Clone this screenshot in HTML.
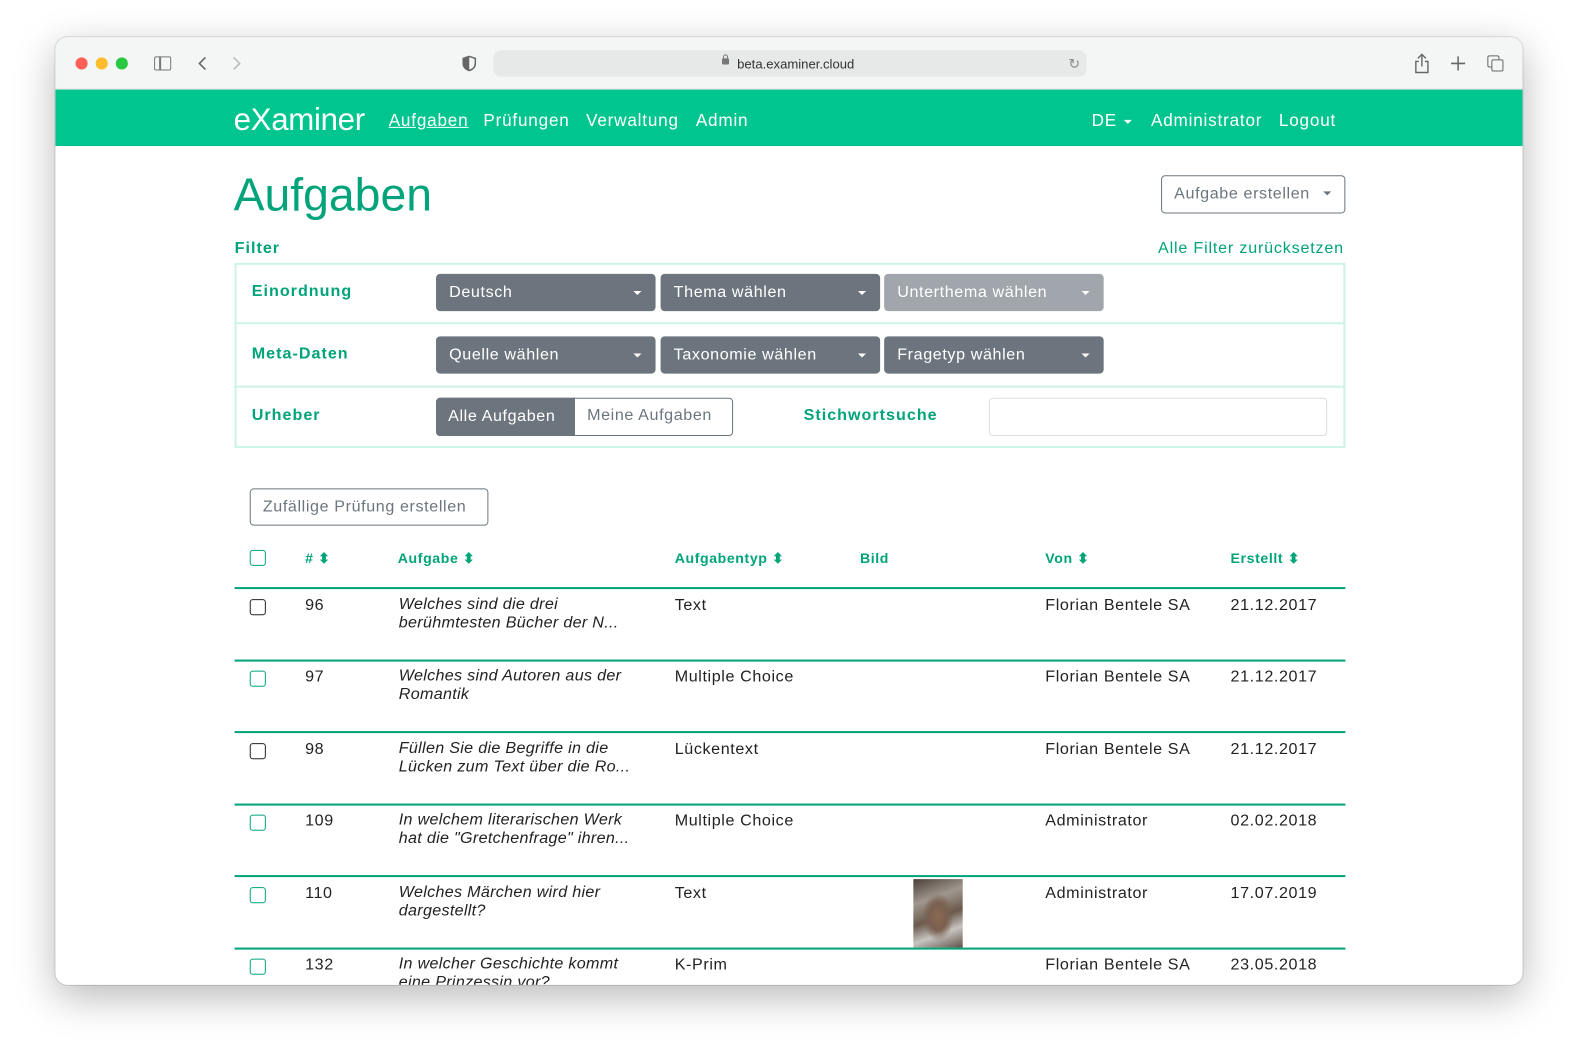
<!DOCTYPE html>
<html><head><meta charset="utf-8"><style>
*{box-sizing:border-box;margin:0;padding:0}
body{width:1579px;height:1059px;background:#fff;font-family:"Liberation Sans",sans-serif;position:relative;overflow:hidden}
#sc{position:absolute;left:0;top:0;width:1568px;height:1052px;transform:scale(1.007);transform-origin:0 0}
.a{position:absolute;white-space:nowrap}
.win{position:absolute;left:55px;top:37px;width:1457px;height:941px;border-radius:12px;overflow:hidden;box-shadow:0 12px 40px rgba(0,0,0,.28),0 0 0 1px rgba(0,0,0,.12);background:#fff}
#in{position:absolute;left:-55px;top:-37px;width:1568px;height:1052px}
.g{color:#00a37a}
.lb{font-size:16px;font-weight:bold;letter-spacing:1px}
.dd{position:absolute;height:37px;border-radius:4px;background:#6c757d;color:#fff;font-size:16px;line-height:37px;padding-left:13px;letter-spacing:0.6px}
.dd:after{content:"";position:absolute;right:14px;top:17px;border:4px solid transparent;border-top:4px solid #fff;border-bottom:0}
.cb{position:absolute;width:16px;height:16px;border:1.5px solid #222;border-radius:3px}
.cb.gg{border-color:#00a37a}
.line{position:absolute;left:233px;width:1103px;height:2px;background:#00a37a}
.row{font-size:16px;color:#222;letter-spacing:0.6px}
.it{font-style:italic;line-height:18px;white-space:normal;width:248px;letter-spacing:0.3px}
.hd{font-size:14px;font-weight:bold;letter-spacing:0.6px}
.nv{font-size:17px;color:#fff;letter-spacing:0.8px}
</style></head><body><div id="sc">
<div class="win"><div id="in">
<div class="a" style="left:55px;top:37px;width:1457px;height:52px;background:#f4f5f5;border-bottom:1px solid #ddd"></div>
<div class="a" style="left:75px;top:57px;width:12px;height:12px;border-radius:6px;background:#fe5f57"></div>
<div class="a" style="left:95px;top:57px;width:12px;height:12px;border-radius:6px;background:#febc2e"></div>
<div class="a" style="left:115px;top:57px;width:12px;height:12px;border-radius:6px;background:#28c840"></div>
<div class="a" style="left:153px;top:56px;width:17px;height:14px;border:1.5px solid #777;border-radius:2px"></div>
<div class="a" style="left:158px;top:56px;width:1.5px;height:14px;background:#777"></div>
<svg class="a" style="left:195px;top:55px" width="12" height="16"><path d="M9 2L3 8l6 6" fill="none" stroke="#666" stroke-width="1.6"/></svg>
<svg class="a" style="left:229px;top:55px" width="12" height="16"><path d="M3 2l6 6-6 6" fill="none" stroke="#bbb" stroke-width="1.6"/></svg>
<svg class="a" style="left:459px;top:55px" width="14" height="16"><path d="M7 1L1 3v5c0 4 3 6 6 7 3-1 6-3 6-7V3z" fill="none" stroke="#666" stroke-width="1.5"/><path d="M7 1v14c-3-1-6-3-6-7V3z" fill="#666"/></svg>
<div class="a" style="left:490px;top:50px;width:589px;height:26px;background:#e7e8e8;border-radius:7px"></div>
<div class="a" style="left:717px;top:58px;width:7px;height:6px;background:#777;border-radius:1px"></div>
<div class="a" style="left:718px;top:54px;width:5px;height:6px;border:1.2px solid #777;border-radius:3px 3px 0 0"></div>
<div class="a" style="left:732px;top:56px;font-size:13px;color:#333">beta.examiner.cloud</div>
<div class="a" style="left:1061px;top:55px;font-size:14px;color:#888">↻</div>
<svg class="a" style="left:1404px;top:53px" width="16" height="20"><path d="M8 1v12M4 5l4-4 4 4M5 8H2v11h12V8h-3" fill="none" stroke="#666" stroke-width="1.4"/></svg>
<svg class="a" style="left:1440px;top:55px" width="16" height="16"><path d="M8 1v14M1 8h14" stroke="#666" stroke-width="1.5"/></svg>
<div class="a" style="left:1477px;top:55px;width:12px;height:12px;border:1.5px solid #666;border-radius:2px"></div>
<div class="a" style="left:1481px;top:59px;width:12px;height:12px;border:1.5px solid #666;border-radius:2px;background:#f4f5f5"></div>
<div class="a" style="left:55px;top:89px;width:1457px;height:56px;background:#00c58f"></div>
<div class="a" style="left:232px;top:101px;font-size:31px;color:#fff;letter-spacing:-0.3px">eXaminer</div>
<div class="a nv" style="left:386px;top:110px;text-decoration:underline">Aufgaben</div>
<div class="a nv" style="left:480px;top:110px">Prüfungen</div>
<div class="a nv" style="left:582px;top:110px">Verwaltung</div>
<div class="a nv" style="left:691px;top:110px">Admin</div>
<div class="a nv" style="left:1084px;top:110px">DE</div>
<div class="a" style="left:1116px;top:119px;border:4px solid transparent;border-top:4px solid #fff;border-bottom:0"></div>
<div class="a nv" style="left:1143px;top:110px">Administrator</div>
<div class="a nv" style="left:1270px;top:110px">Logout</div>

<div class="a g" style="left:232px;top:166px;font-size:46px">Aufgaben</div>
<div class="a" style="left:1153px;top:174px;width:183px;height:38px;border:1px solid #6c757d;border-radius:4px;color:#6c757d;font-size:16px;line-height:36px;padding-left:12px;letter-spacing:0.6px">Aufgabe erstellen</div>
<div class="a" style="left:1314px;top:190px;border:4px solid transparent;border-top:4px solid #6c757d;border-bottom:0"></div>
<div class="a g lb" style="left:233px;top:238px">Filter</div>
<div class="a g" style="left:1150px;top:238px;font-size:16px;letter-spacing:0.8px">Alle Filter zurücksetzen</div>
<div class="a" style="left:233px;top:261px;width:1103px;height:184px;border:2px solid #ccf3e6"></div>
<div class="a" style="left:233px;top:320px;width:1103px;height:2px;background:#ccf3e6"></div>
<div class="a" style="left:233px;top:383px;width:1103px;height:2px;background:#ccf3e6"></div>
<div class="a g lb" style="left:250px;top:281px">Einordnung</div>
<div class="a g lb" style="left:250px;top:343px">Meta-Daten</div>
<div class="a g lb" style="left:250px;top:404px">Urheber</div>
<div class="dd" style="left:433px;top:272px;width:218px">Deutsch</div>
<div class="dd" style="left:656px;top:272px;width:218px">Thema wählen</div>
<div class="dd" style="left:878px;top:272px;width:218px;background:#a0a6ab">Unterthema wählen</div>
<div class="dd" style="left:433px;top:334px;width:218px">Quelle wählen</div>
<div class="dd" style="left:656px;top:334px;width:218px">Taxonomie wählen</div>
<div class="dd" style="left:878px;top:334px;width:218px">Fragetyp wählen</div>
<div class="a" style="left:433px;top:395px;width:295px;height:38px;border:1px solid #6c757d;border-radius:4px"></div>
<div class="a" style="left:433px;top:395px;width:138px;height:38px;background:#6c757d;border-radius:4px 0 0 4px;color:#fff;font-size:16px;line-height:38px;padding-left:12px;letter-spacing:0.6px">Alle Aufgaben</div>
<div class="a" style="left:583px;top:404px;font-size:16px;color:#6c757d;letter-spacing:0.6px">Meine Aufgaben</div>
<div class="a g lb" style="left:798px;top:404px">Stichwortsuche</div>
<div class="a" style="left:982px;top:395px;width:336px;height:38px;border:1px solid #ddd;border-radius:4px"></div>
<div class="a" style="left:248px;top:485px;width:237px;height:37px;border:1px solid #6c757d;border-radius:4px;color:#6c757d;font-size:16px;line-height:35px;padding-left:12px;letter-spacing:0.6px">Zufällige Prüfung erstellen</div>
<div class="cb gg" style="left:248px;top:546px"></div>
<div class="a g hd" style="left:303px;top:546px"># ⬍</div>
<div class="a g hd" style="left:395px;top:546px">Aufgabe ⬍</div>
<div class="a g hd" style="left:670px;top:546px">Aufgabentyp ⬍</div>
<div class="a g hd" style="left:854px;top:546px">Bild</div>
<div class="a g hd" style="left:1038px;top:546px">Von ⬍</div>
<div class="a g hd" style="left:1222px;top:546px">Erstellt ⬍</div>
<div class="line" style="top:583px"></div>
<div class="line" style="top:655px"></div>
<div class="line" style="top:726px"></div>
<div class="line" style="top:798px"></div>
<div class="line" style="top:869px"></div>
<div class="line" style="top:941px"></div>

<div class="cb" style="left:248px;top:595px"></div>
<div class="a row" style="left:303px;top:593px">96</div>
<div class="a row it" style="left:396px;top:592px">Welches sind die drei berühmtesten Bücher der N...</div>
<div class="a row" style="left:670px;top:593px">Text</div>
<div class="a row" style="left:1038px;top:593px">Florian Bentele SA</div>
<div class="a row" style="left:1222px;top:593px">21.12.2017</div>

<div class="cb gg" style="left:248px;top:666px"></div>
<div class="a row" style="left:303px;top:664px">97</div>
<div class="a row it" style="left:396px;top:663px">Welches sind Autoren aus der Romantik</div>
<div class="a row" style="left:670px;top:664px">Multiple Choice</div>
<div class="a row" style="left:1038px;top:664px">Florian Bentele SA</div>
<div class="a row" style="left:1222px;top:664px">21.12.2017</div>

<div class="cb" style="left:248px;top:738px"></div>
<div class="a row" style="left:303px;top:736px">98</div>
<div class="a row it" style="left:396px;top:735px">Füllen Sie die Begriffe in die Lücken zum Text über die Ro...</div>
<div class="a row" style="left:670px;top:736px">Lückentext</div>
<div class="a row" style="left:1038px;top:736px">Florian Bentele SA</div>
<div class="a row" style="left:1222px;top:736px">21.12.2017</div>

<div class="cb gg" style="left:248px;top:809px"></div>
<div class="a row" style="left:303px;top:807px">109</div>
<div class="a row it" style="left:396px;top:806px">In welchem literarischen Werk hat die "Gretchenfrage" ihren...</div>
<div class="a row" style="left:670px;top:807px">Multiple Choice</div>
<div class="a row" style="left:1038px;top:807px">Administrator</div>
<div class="a row" style="left:1222px;top:807px">02.02.2018</div>

<div class="cb gg" style="left:248px;top:881px"></div>
<div class="a row" style="left:303px;top:879px">110</div>
<div class="a row it" style="left:396px;top:878px">Welches Märchen wird hier dargestellt?</div>
<div class="a row" style="left:670px;top:879px">Text</div>
<div class="a" style="left:907px;top:873px;width:49px;height:68px;background:radial-gradient(ellipse at 50% 55%,#8a6a52 0,#7a6050 25%,transparent 45%),linear-gradient(160deg,#4a4038,#a09890 30%,#6a5a4c 55%,#c8c4c0 75%,#5e5248)"></div>
<div class="a row" style="left:1038px;top:879px">Administrator</div>
<div class="a row" style="left:1222px;top:879px">17.07.2019</div>

<div class="cb gg" style="left:248px;top:952px"></div>
<div class="a row" style="left:303px;top:950px">132</div>
<div class="a row it" style="left:396px;top:949px">In welcher Geschichte kommt eine Prinzessin vor?</div>
<div class="a row" style="left:670px;top:950px">K-Prim</div>
<div class="a row" style="left:1038px;top:950px">Florian Bentele SA</div>
<div class="a row" style="left:1222px;top:950px">23.05.2018</div>
</div></div>
</div></body></html>
